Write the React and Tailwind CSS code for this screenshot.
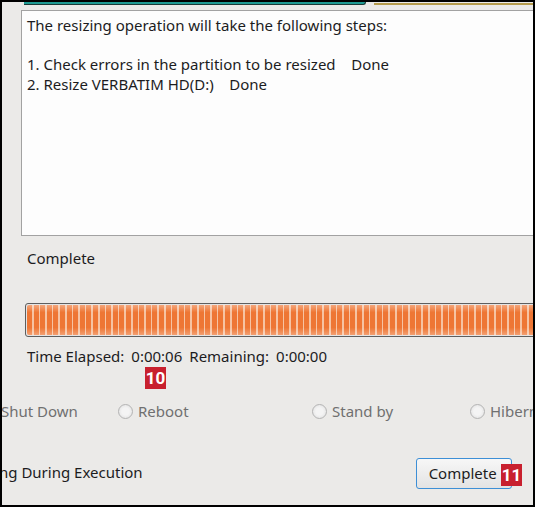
import React from 'react';

const Badge = ({ children, className }) => (
  <div
    className={`absolute flex items-center justify-center bg-[#c8202e] text-white font-bold text-[17px] leading-none ${className}`}
    style={{ fontFamily: 'Roboto, "Liberation Sans", sans-serif' }}
  >
    {children}
  </div>
);

const Radio = ({ label }) => (
  <div className="flex items-center gap-[5px] whitespace-nowrap">
    <span className="shrink-0 w-[15px] h-[15px] rounded-full border border-[#b4b4b4] bg-[radial-gradient(circle,#f4f4f4_40%,#dcdcdc_100%)]" />
    <span>{label}</span>
  </div>
);

const App = () => {
  return (
    <div
      className="relative w-[535px] h-[507px] overflow-hidden bg-[#ebeae8] border-2 border-black text-[#1c1c1e] text-[15px]"
      style={{ fontFamily: '"Noto Sans", "Open Sans", sans-serif' }}
    >
      {/* top of the disk map, cut off */}
      <div className="flex h-[6px] items-start">
        <div className="ml-[22px] w-[342px] h-[3px] bg-[#1e9a92] border-b border-r border-[#1a3a36] rounded-br-[4px]" />
        <div className="ml-[8px] flex-1 h-[3px] border-b-2 border-[#b59b4c]" />
      </div>

      {/* steps box */}
      <div className="ml-[19px] mt-[2px] w-[540px] h-[226px] bg-[#fdfdfd] border border-[#a2a2a2] pl-[5px] pt-[5px] leading-[19.5px]">
        <div>The resizing operation will take the following steps:</div>
        <div>&nbsp;</div>
        <div>1. Check errors in the partition to be resized&nbsp;&nbsp;&nbsp;&nbsp;Done</div>
        <div>2. Resize VERBATIM HD(D:)&nbsp;&nbsp;&nbsp;&nbsp;Done</div>
      </div>

      <div className="ml-[25px] mt-[12px] leading-[20px]">Complete</div>

      {/* progress bar */}
      <div className="ml-[23px] mt-[35px] w-[530px] h-[34px] rounded-[3px] border border-[#5e5e5e] bg-[#e4e4e4] p-[1px]">
        <div className="h-full w-full rounded-[2px] bg-[linear-gradient(180deg,rgba(255,255,255,0.35)_0%,rgba(255,255,255,0)_25%,rgba(255,255,255,0)_75%,rgba(255,255,255,0.3)_100%),repeating-linear-gradient(90deg,#ee7634_0px,#ee7634_5px,#f6c3a2_5px,#f6c3a2_6.6px)]" />
      </div>

      <div className="ml-[25px] mt-[9px] leading-[20px] flex whitespace-nowrap">
        <span>Time Elapsed:</span>
        <span className="ml-[7px]">0:00:06</span>
        <span className="ml-[7px]">Remaining:</span>
        <span className="ml-[7px]">0:00:00</span>
      </div>

      {/* shutdown options, disabled */}
      <div className="mt-[35px] flex items-center text-[#707070] leading-[20px] whitespace-nowrap">
        <div className="-ml-[1px] w-[117px] shrink-0">Shut Down</div>
        <div className="w-[194px] shrink-0"><Radio label="Reboot" /></div>
        <div className="w-[158px] shrink-0"><Radio label="Stand by" /></div>
        <div className="shrink-0"><Radio label="Hibernate" /></div>
      </div>

      <div className="mt-[37px] flex items-center whitespace-nowrap">
        <span className="-ml-[3px] -mt-[4px] leading-[20px]">ng During Execution</span>
        <button className="ml-[273px] shrink-0 w-[96px] h-[31px] rounded-[3px] border-[1.5px] border-[#3d8fd6] bg-[linear-gradient(180deg,#f7f7f7,#e3e3e3)] text-left pl-[12px]">
          Complete
        </button>
      </div>

      <Badge className="left-[143px] top-[365px] w-[21px] h-[22px]">10</Badge>
      <Badge className="left-[499px] top-[462px] w-[21px] h-[22px]">11</Badge>
    </div>
  );
};

export default App;
